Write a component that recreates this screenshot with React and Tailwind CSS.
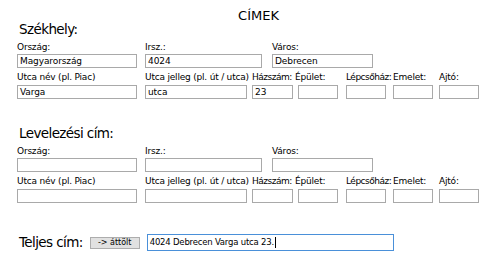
import React from "react";

const FONT = "font-['Tahoma','DejaVu_Sans',sans-serif]";

function Field({ label, value = "", w, labelShift = "", labelH = "h-[14px] leading-[14px]" }) {
  return (
    <div className={`flex flex-col ${w}`}>
      <span className={`text-[9px] tracking-[-0.2px] whitespace-nowrap ${labelH} ${labelShift}`}>{label}</span>
      <div className="h-[14px] border border-[#a9a9a9] bg-white px-[2px] text-[9px] leading-[12px] tracking-[-0.1px] whitespace-nowrap">
        {value}
      </div>
    </div>
  );
}

function AddressBlock({ title, data = {}, className = "" }) {
  const row2 = "h-[15px] leading-[14px]";
  return (
    <section className={`pl-[17px] ${className}`}>
      <h2 className="text-[13.5px] leading-[13px] tracking-[-0.6px] pl-[2px]">{title}</h2>
      <div className="flex mt-[4px]">
        <Field label="Ország:" value={data.orszag} w="w-[120px]" />
        <Field label="Irsz.:" value={data.irsz} w="w-[117px] ml-[8px]" />
        <Field label="Város:" value={data.varos} w="w-[101px] ml-[10px]" />
      </div>
      <div className="flex mt-[2px]">
        <Field label="Utca név (pl. Piac)" value={data.utca} w="w-[120px]" labelH={row2} />
        <Field label="Utca jelleg (pl. út / utca)" value={data.jelleg} w="w-[102px] ml-[8px]" labelH={row2} />
        <Field label="Házszám:" value={data.hazszam} w="w-[41px] ml-[5px]" labelH={row2} labelShift="text-[8.5px] tracking-[-0.5px]" />
        <Field label="Épület:" w="w-[40px] ml-[5px]" labelShift="-ml-[3px]" labelH={row2} />
        <Field label="Lépcsőház:" w="w-[40px] ml-[8px]" labelH={row2} labelShift="text-[8.5px] tracking-[-0.5px]" />
        <Field label="Emelet:" w="w-[40px] ml-[7px]" labelH={row2} />
        <Field label="Ajtó:" w="w-[40px] ml-[6px]" labelH={row2} />
      </div>
    </section>
  );
}

export default function App() {
  return (
    <div className={`w-[503px] h-[274px] bg-white text-black overflow-hidden ${FONT}`}>
      <div className="pt-[11px] pl-[14px] text-center text-[13px] leading-[10px]">CÍMEK</div>

      <AddressBlock
        className="mt-[2px]"
        title="Székhely:"
        data={{
          orszag: "Magyarország",
          irsz: "4024",
          varos: "Debrecen",
          utca: "Varga",
          jelleg: "utca",
          hazszam: "23",
        }}
      />

      <AddressBlock className="mt-[28px]" title="Levelezési cím:" />

      <div className="flex items-center pl-[19px] mt-[31px]">
        <span className="text-[13.5px] leading-[15px] tracking-[-0.6px]">Teljes cím:</span>
        <button className="ml-[7px] h-[12px] w-[50px] bg-[#e1e1e1] border border-[#adadad] text-[8px] leading-[10px] text-center">
          -&gt; áttölt
        </button>
        <div className="ml-[7px] h-[17px] w-[247px] border border-[#4a90d9] px-[2px] text-[8.5px] tracking-[-0.2px] flex items-center">
          4024 Debrecen Varga utca 23.
          <span className="inline-block w-[1px] h-[11px] bg-black ml-[1px]" />
        </div>
      </div>
    </div>
  );
}
